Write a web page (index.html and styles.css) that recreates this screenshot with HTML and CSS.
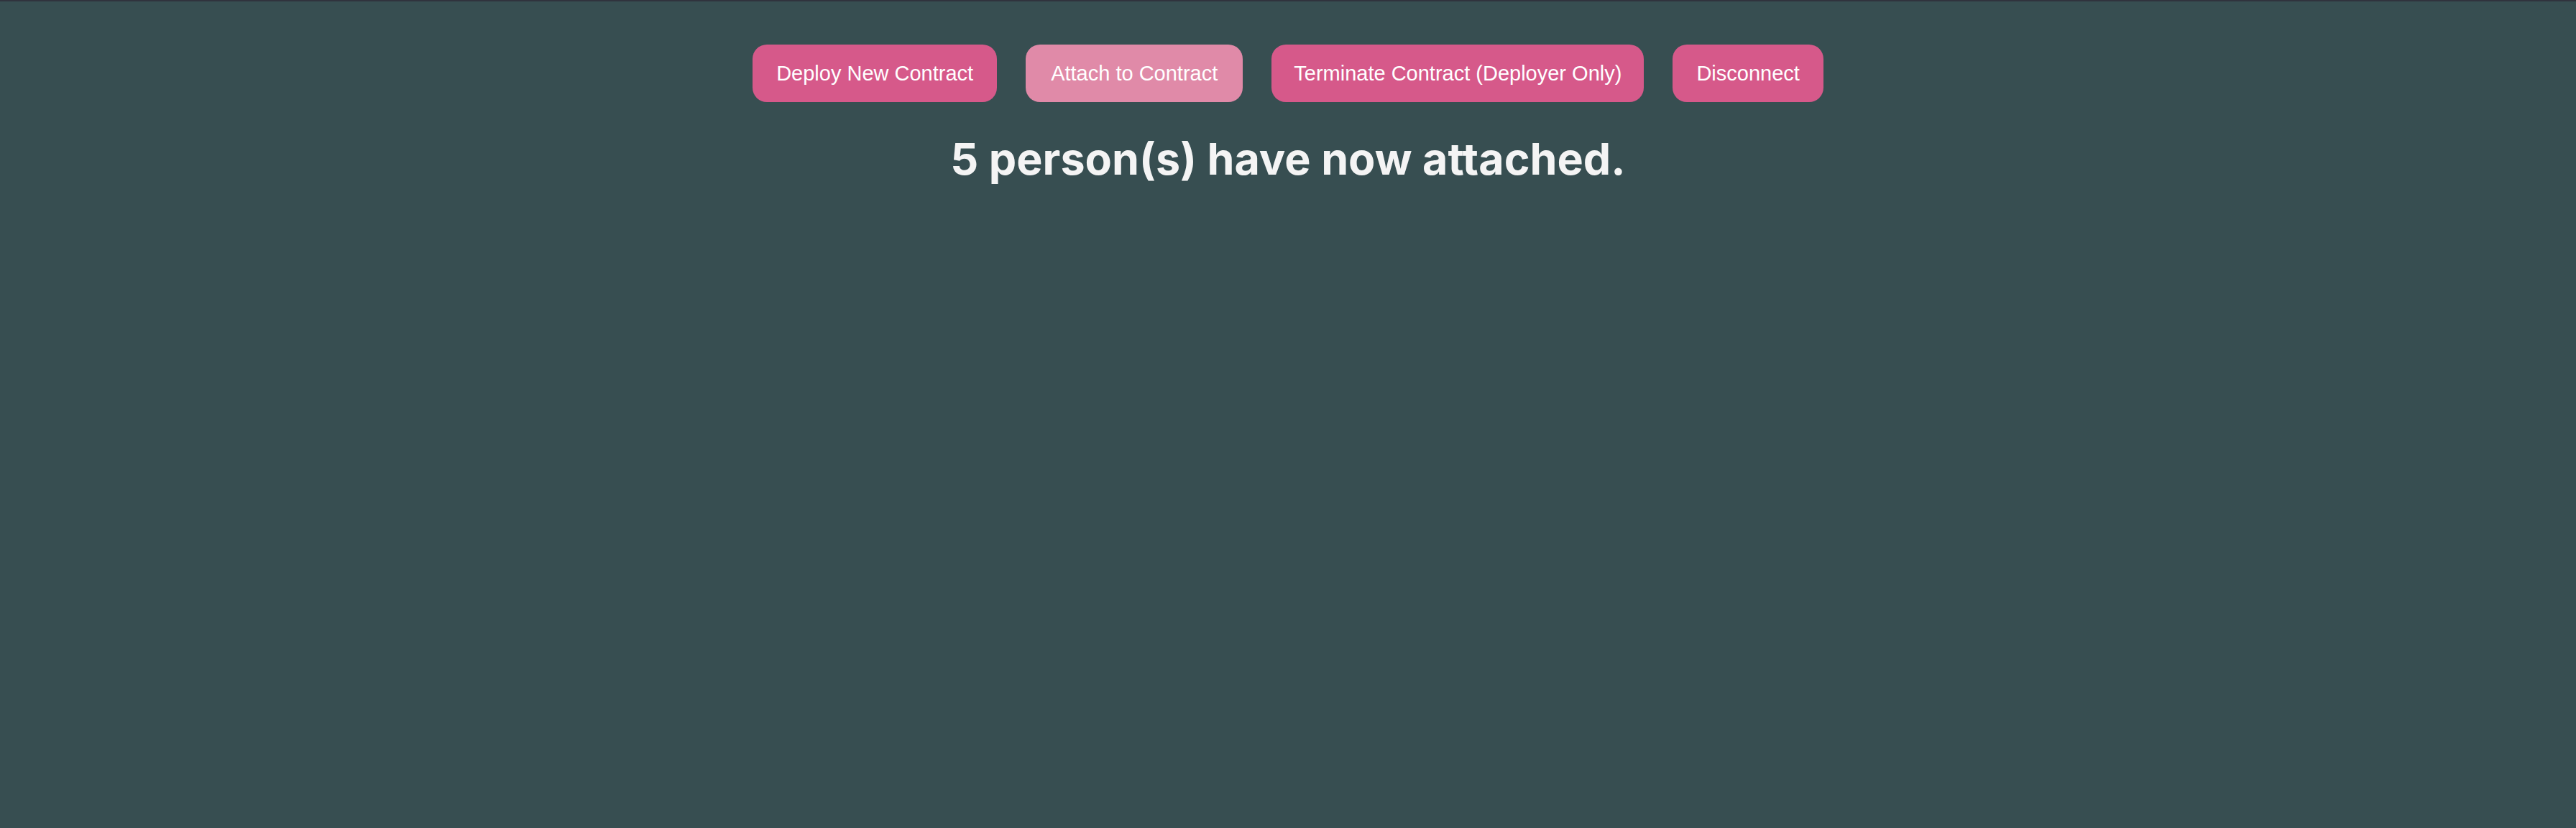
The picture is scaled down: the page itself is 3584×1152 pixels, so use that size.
FILE: index.html
```html
<!DOCTYPE html>
<html>
<head>
<meta charset="utf-8">
<link rel="stylesheet" href="styles.css">
</head>
<body>
<div class="app">
  <div class="actions">
    <button class="btn">Deploy New Contract</button>
    <button class="btn btn-muted">Attach to Contract</button>
    <button class="btn btn-wide">Terminate Contract (Deployer Only)</button>
    <button class="btn">Disconnect</button>
  </div>
  <h1 class="status">5 person(s) have now attached.</h1>
</div>
</body>
</html>
```
FILE: styles.css
```css
html, body {
  margin: 0;
  padding: 0;
  height: 100%;
}
body {
  background: #374e51;
  border-top: 2px solid #30333d;
  box-sizing: border-box;
}
.app {
  display: flex;
  flex-direction: column;
  align-items: center;
  padding-top: 60px;
}
.actions {
  display: flex;
  gap: 40px;
}
.btn {
  font-family: "Liberation Sans", Arial, sans-serif;
  font-size: 29px;
  color: #ffffff;
  background: #d6598a;
  border: none;
  border-radius: 20px;
  height: 80px;
  padding: 0 33px;
  display: inline-flex;
  align-items: center;
}
.btn-muted {
  background: #e08aa8;
  padding: 0 35px;
}
.btn-wide {
  padding: 0 31px;
}
.status {
  font-family: Inter, "Noto Sans", sans-serif;
  font-weight: 700;
  font-size: 61px;
  color: #f4f4f4;
  margin: 43px 0 0;
  line-height: 1.2;
}
```
